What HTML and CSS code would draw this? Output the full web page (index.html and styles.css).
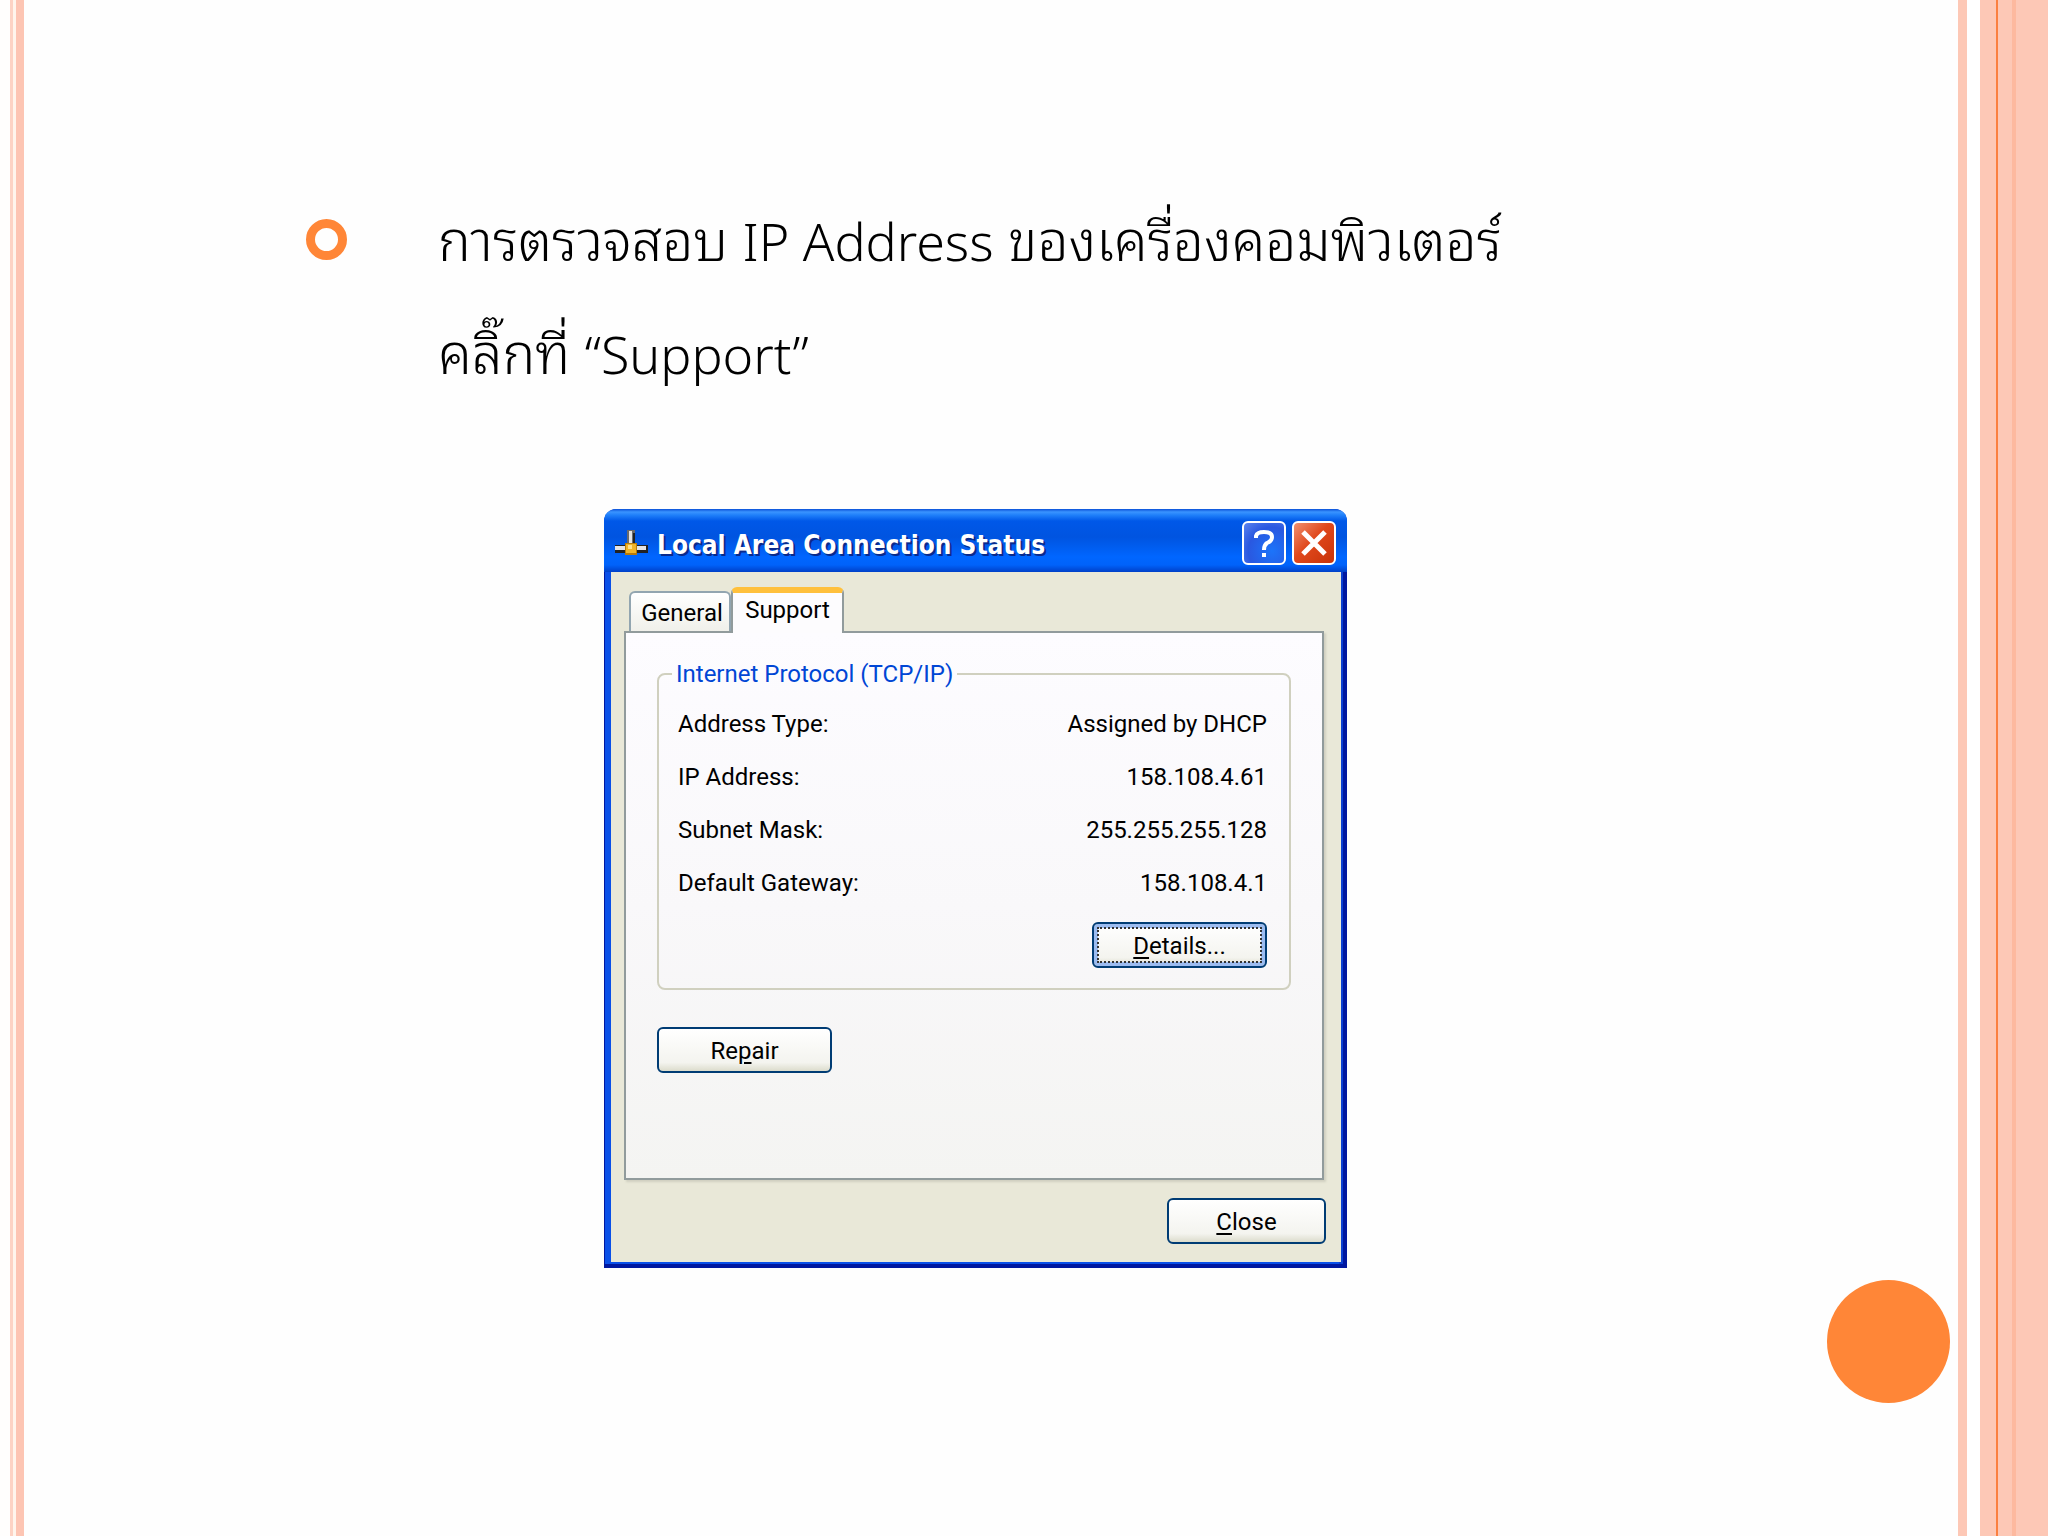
FILE: index.html
```
<!DOCTYPE html>
<html lang="th">
<head>
    <meta charset="UTF-8">
    <meta name="viewport" content="width=device-width, initial-scale=1.0">
    <title>การตรวจสอบ IP Address</title>
    <link rel="stylesheet" href="styles.css">
</head>
<body>

    <div class="rail rail-left"></div>

    <main class="slide">
        <ul class="points">
            <li class="point">
                <span class="bullet"></span>
                <p class="point-text">การตรวจสอบ <span class="latin">IP Address</span> ของเครื่องคอมพิวเตอร์<br>คลิ๊กที่ <span class="latin">“Support”</span></p>
            </li>
        </ul>

        <section class="window">
            <header class="titlebar">
                <svg class="title-icon" viewBox="0 0 34 26">
                    <rect x="12" y="0" width="8" height="16" fill="#6b6b6b"/>
                    <rect x="14" y="1" width="3" height="14" fill="#e4e4e4"/>
                    <rect x="18" y="3" width="2" height="12" fill="#222"/>
                    <rect x="0" y="15" width="33" height="8" fill="#222"/>
                    <rect x="0" y="16" width="31" height="4" fill="#e4e4e4"/>
                    <rect x="10" y="13" width="12" height="12" fill="#b87a08"/>
                    <rect x="11" y="14" width="10" height="9" fill="#f0b429"/>
                    <rect x="13" y="15" width="4" height="4" fill="#ffe08a"/>
                </svg>
                <h1 class="title">Local Area Connection Status</h1>
                <button class="title-button help" aria-label="Help">
                    <svg viewBox="0 0 36 36"><path d="M10 13V11Q11 7 18 7Q26 7 26 12Q26 16 21 18Q18 20 18 25M18 28V32" fill="none" stroke="#fff" stroke-width="4"/></svg>
                </button>
                <button class="title-button quit" aria-label="Close window">
                    <svg viewBox="0 0 36 36"><path d="M7 7L29 29M29 7L7 29" fill="none" stroke="#fff" stroke-width="5"/></svg>
                </button>
            </header>

            <div class="window-body">
                <div class="tabs">
                    <button class="tab">General</button>
                    <button class="tab active">Support</button>
                </div>

                <div class="panel">
                    <fieldset class="group">
                        <legend>Internet Protocol (TCP/IP)</legend>
                        <dl class="info">
                            <div class="row"><dt>Address Type:</dt><dd>Assigned by DHCP</dd></div>
                            <div class="row"><dt>IP Address:</dt><dd>158.108.4.61</dd></div>
                            <div class="row"><dt>Subnet Mask:</dt><dd>255.255.255.128</dd></div>
                            <div class="row"><dt>Default Gateway:</dt><dd>158.108.4.1</dd></div>
                        </dl>
                        <button class="button focused"><u>D</u>etails...</button>
                    </fieldset>
                    <button class="button">Re<u>p</u>air</button>
                </div>

                <footer class="actions">
                    <button class="button close"><u>C</u>lose</button>
                </footer>
            </div>
        </section>

        <div class="dot"></div>
    </main>

    <div class="rail rail-right"></div>

</body>
</html>
```
FILE: styles.css
```
* {
    box-sizing: border-box;
}
body {
    margin: 0;
    min-height: 100vh;
    display: flex;
    background-color: #fefefe;
    color: #000;
    font-family: Roboto, "Liberation Sans", sans-serif;
}

/* side stripes */
.rail-left {
    width: 24px;
    background: linear-gradient(to right, #fffefd 10px, #fdd3c4 10px 13px, #fff5ec 13px 16px, #fdc5b3 16px);
}
.rail-right {
    width: 90px;
    background: linear-gradient(to right, #fdc8b6 9px, #fff 9px 22px, #fdc8b6 22px 38px, #fb8040 38px 40px, #fdc8b6 40px 54px, #fdb99f 54px 58px, #fdc8b6 58px);
}

.slide {
    flex: 1;
    display: flex;
    flex-direction: column;
}
.points {
    list-style: none;
    margin: 0;
    padding: 180px 0 0 282px;
}
.point {
    display: flex;
    gap: 91px;
}
.bullet {
    width: 41px;
    height: 41px;
    margin-top: 39px;
    border: 9px solid #ff8637;
    border-radius: 50%;
}
.point-text {
    margin: 0;
    font-family: "Noto Sans Thai Looped", "Noto Sans Thai", "Noto Sans", sans-serif;
    font-weight: 300;
    font-size: 55px;
    line-height: 113px;
}
.latin {
    font-family: "Noto Sans", "Open Sans", sans-serif;
    font-size: 52px;
    line-height: 60px;
}

/* dialog window */
.window {
    width: 743px;
    margin: 103px 0 0 580px;
    border-radius: 12px 12px 0 0;
    background-color: #0a46d8;
    overflow: hidden;
}
.titlebar {
    position: relative;
    z-index: 1;
    height: 63px;
    padding: 4px 11px 0 11px;
    display: flex;
    align-items: center;
    gap: 6px;
    background: linear-gradient(#0a50d8 0, #3a94ff 3px, #2080fa 6px, #0058e8 12px, #0054e0 28px, #0066ff 48px, #0062fa 56px, #0040c8 63px);
}
.title-icon {
    width: 34px;
    height: 26px;
}
.title {
    flex: 1;
    margin: 0;
    padding: 4px 0 0 2px;
    font-family: "DejaVu Sans Condensed", "DejaVu Sans", sans-serif;
    font-size: 26px;
    line-height: 36px;
    font-weight: bold;
    color: #fff;
    text-shadow: 2px 2px 0 #0a2a8c;
}
.title-button {
    width: 44px;
    height: 44px;
    padding: 2px;
    border: 2px solid #fff;
    border-radius: 6px;
}
.title-button svg {
    display: block;
    width: 36px;
    height: 36px;
}
.help {
    background: radial-gradient(circle at 70% 70%, #1c74fa, #2a58e0 60%, #5c84f0);
}
.quit {
    background: linear-gradient(135deg, #f09070, #e0481c 45%, #c83208);
}
.window-body {
    margin: 0 6px 6px 7px;
    padding: 15px 15px 18px 13px;
    background-color: #e9e8d8;
    box-shadow: -4px 0 0 2px #0a50e8, 0 0 0 2px #0a40d0, 0 0 0 8px #0018a0;
    font-size: 24px;
    line-height: 28px;
}

/* tabs */
.tabs {
    display: flex;
    align-items: flex-end;
    padding-left: 5px;
}
.tab {
    width: 102px;
    height: 40px;
    padding: 2px 0 0 4px;
    border: 2px solid #92a5b0;
    border-bottom: none;
    border-radius: 6px 6px 0 0;
    background: linear-gradient(#fff, #f0f0ea);
    font: inherit;
    color: inherit;
}
.tab.active {
    width: 113px;
    height: 46px;
    margin-bottom: -2px;
    padding: 0 0 7px;
    border-color: #919b9c;
    border-top: 6px solid #ffc03c;
    background: #fdfcfe;
    z-index: 1;
}
.panel {
    height: 549px;
    margin-right: 2px;
    padding: 27px 31px;
    border: 2px solid #919b9c;
    background: linear-gradient(#fdfcff, #f9f8fa 50%, #f4f4f2);
    box-shadow: 2px 2px 2px #d0cfc0;
}
.group {
    height: 330px;
    margin: 0 0 37px;
    padding: 10px 22px 0 19px;
    border: 2px solid #d0d0bf;
    border-radius: 8px;
    display: flex;
    flex-direction: column;
}
.group legend {
    margin-left: -6px;
    padding: 0 4px;
    color: #0046d5;
}
.info {
    margin: 0 0 12px;
}
.row {
    display: flex;
    justify-content: space-between;
    line-height: 53px;
}
.row dd {
    margin: 0;
}

.button {
    width: 175px;
    height: 46px;
    padding: 2px 0 0;
    border: 2px solid #003c74;
    border-radius: 6px;
    background: linear-gradient(#fff, #f4f4ef 80%, #dcdccc);
    font: inherit;
    color: inherit;
}
.button u {
    text-underline-offset: 3px;
}
.focused {
    align-self: flex-end;
    box-shadow: inset 0 0 0 4px #9cbcf0;
    outline: 2px dotted #333;
    outline-offset: -7px;
}
.actions {
    display: flex;
    justify-content: flex-end;
    padding-top: 18px;
}
.close {
    width: 159px;
}

.dot {
    align-self: flex-end;
    width: 123px;
    height: 123px;
    margin: 12px 8px 0 0;
    border-radius: 50%;
    background-color: #ff8637;
}
```
